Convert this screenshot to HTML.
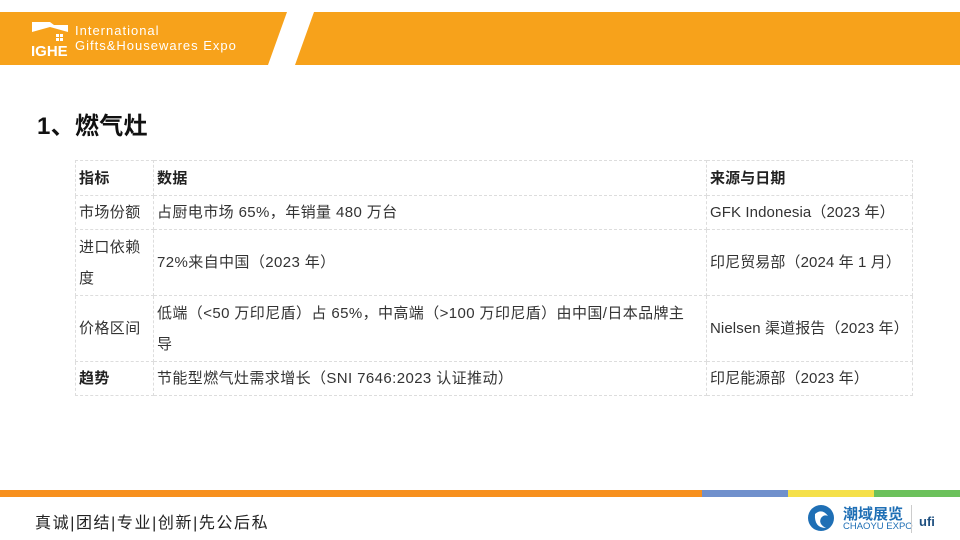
<!DOCTYPE html>
<html><head><meta charset="utf-8"><style>
*{margin:0;padding:0;box-sizing:border-box}
body{width:960px;height:540px;position:relative;background:#fff;font-family:"Liberation Sans","Noto Sans CJK SC",sans-serif;overflow:hidden;color:#222}
.abs{position:absolute}
table{position:absolute;left:75px;top:160px;width:838px;border-collapse:collapse;font-size:15px;color:#333;letter-spacing:0.4px;table-layout:fixed}
td{border:1px dashed #ddd;padding:0 3px;vertical-align:middle;line-height:31px}
td:nth-child(3){white-space:nowrap;letter-spacing:0.1px}
td.b{font-weight:bold;color:#222}
</style></head><body>
<svg class="abs" style="left:0;top:0" width="960" height="70">
<polygon points="0,12 287,12 268,65 0,65" fill="#f7a21b"/>
<polygon points="314,12 960,12 960,65 295,65" fill="#f7a21b"/>
<polygon points="32,22 50,22 54,25 68,25 68,32 50,27 32,32" fill="#fff"/>
<rect x="56" y="34" width="3" height="3" fill="#fff"/><rect x="60" y="34" width="3" height="3" fill="#fff"/>
<rect x="56" y="38" width="3" height="3" fill="#fff"/><rect x="60" y="38" width="3" height="3" fill="#fff"/>
<text x="31" y="56" fill="#fff" font-family="Liberation Sans" font-weight="bold" font-size="15">IGHE</text>
<text x="75" y="35" fill="#fff" font-family="Liberation Sans" font-size="13" letter-spacing="1">International</text>
<text x="75" y="50" fill="#fff" font-family="Liberation Sans" font-size="13" letter-spacing="1">Gifts&amp;Housewares Expo</text>
</svg>
<div class="abs" style="left:37px;top:106px;font-size:24px;font-weight:bold;color:#111;letter-spacing:0.3px">1、燃气灶</div>
<table>
<colgroup><col style="width:78px"><col style="width:553px"><col></colgroup>
<tr style="height:35px"><td class="b">指标</td><td class="b">数据</td><td class="b">来源与日期</td></tr>
<tr style="height:34px"><td>市场份额</td><td>占厨电市场 65%，年销量 480 万台</td><td>GFK Indonesia（2023 年）</td></tr>
<tr style="height:66px"><td>进口依赖度</td><td>72%来自中国（2023 年）</td><td>印尼贸易部（2024 年 1 月）</td></tr>
<tr style="height:66px"><td>价格区间</td><td style="white-space:nowrap">低端（&lt;50 万印尼盾）占 65%，中高端（&gt;100 万印尼盾）由中国/日本品牌主<br>导</td><td>Nielsen 渠道报告（2023 年）</td></tr>
<tr style="height:34px"><td class="b">趋势</td><td>节能型燃气灶需求增长（SNI 7646:2023 认证推动）</td><td>印尼能源部（2023 年）</td></tr>
</table>
<div class="abs" style="left:0;top:490px;width:702px;height:7px;background:#f7901e"></div>
<div class="abs" style="left:702px;top:490px;width:86px;height:7px;background:#7090cc"></div>
<div class="abs" style="left:788px;top:490px;width:86px;height:7px;background:#f5e04a"></div>
<div class="abs" style="left:874px;top:490px;width:86px;height:7px;background:#6cc15c"></div>
<div class="abs" style="left:35px;top:509px;font-size:16px;color:#222;letter-spacing:1.6px">真诚|团结|专业|创新|先公后私</div>
<svg class="abs" style="left:806px;top:502px" width="30" height="32"><circle cx="15" cy="16" r="13" fill="#1f6fb5"/><path d="M9 12 Q16 6 22 14 Q18 12 15 16 Q12 22 20 26 Q8 26 9 12Z" fill="#fff"/></svg>
<div class="abs" style="left:843px;top:503px;font-size:15px;color:#1f6fb5;font-weight:bold">潮域展览</div>
<div class="abs" style="left:843px;top:521px;font-size:9.5px;color:#1f6fb5">CHAOYU EXPO</div>
<div class="abs" style="left:911px;top:505px;width:1px;height:28px;background:#ccc"></div>
<div class="abs" style="left:919px;top:514px;font-size:13px;color:#1f5080;font-weight:bold">ufi</div>
</body></html>
